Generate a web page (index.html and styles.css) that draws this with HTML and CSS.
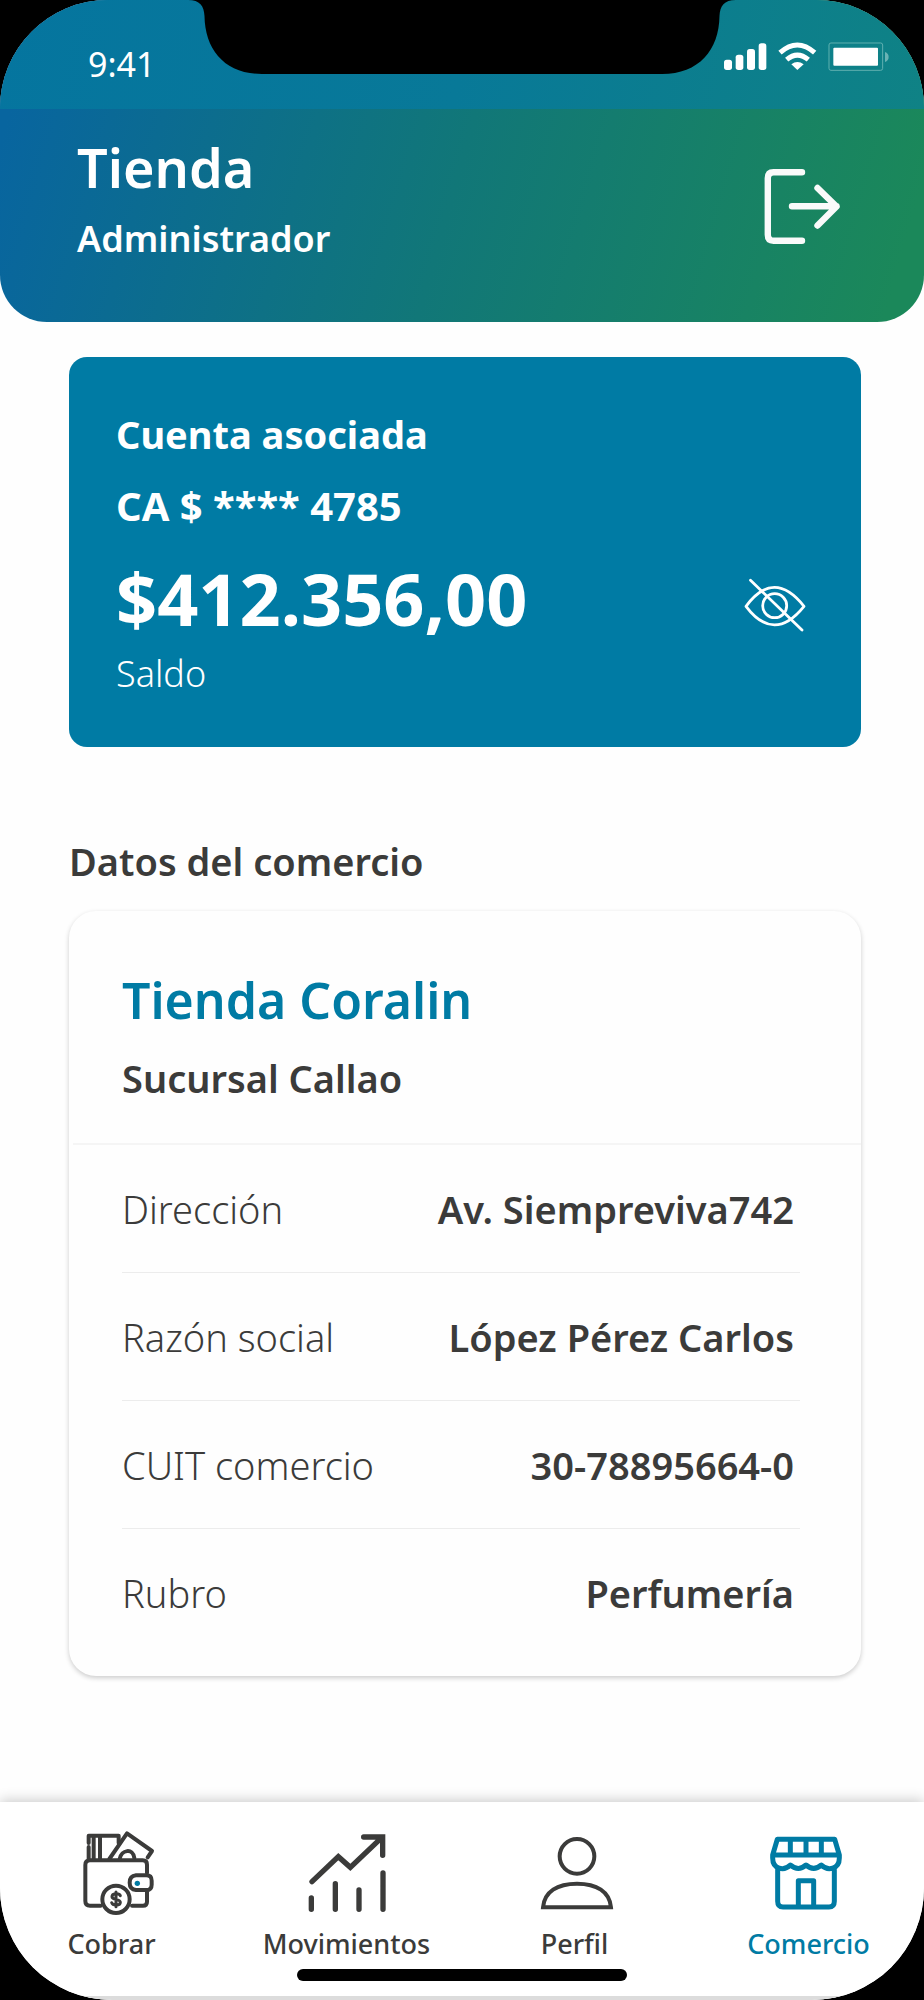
FILE: index.html
```html
<!DOCTYPE html>
<html lang="es">
<head>
<meta charset="utf-8">
<meta name="viewport" content="width=device-width, initial-scale=1">
<title>Comercio</title>
<link rel="stylesheet" href="styles.css">
</head>
<body>
<div class="phone">
  <header class="top">
    <div class="status">
      <svg class="notch" viewBox="188 0 548 75" aria-hidden="true"><path d="M188 0C200 0 204 6 204.5 16C205 50 225 74 262 74H662C699 74 719 50 719.5 16C720 6 724 0 736 0Z"/></svg>
      <span class="time">9:41</span>
      <svg class="signal" viewBox="780 120 510 100" aria-hidden="true">
        <g fill="#fff">
          <rect x="786" y="179" width="24" height="31" rx="8"/><rect x="821" y="164" width="23" height="46" rx="8"/><rect x="855" y="147" width="24" height="63" rx="8"/><rect x="890" y="130" width="23" height="80" rx="8"/>
          <path d="M1006 210L988 193Q1006 179 1025 193Z"/>
          <rect x="1114" y="143" width="134" height="54" rx="3"/>
        </g>
        <g fill="none" stroke="#fff" stroke-width="15"><path d="M954 158Q1006 112 1058 158"/><path d="M974 179Q1006 152 1039 179"/></g>
        <rect x="1101" y="129" width="161" height="82" rx="6" fill="none" stroke="#5fb0b0" stroke-width="3"/>
        <path d="M1269 156Q1280 160 1280 171Q1280 182 1269 186Z" fill="#6ab3b4"/>
      </svg>
    </div>
    <div class="brand">
      <div class="brand-text">
        <h1 class="brand-name">Tienda</h1>
        <p class="brand-role">Administrador</p>
      </div>
      <button class="icon-button" type="button" aria-label="Salir">
        <svg class="logout" viewBox="764 168 78 78" fill="none" stroke="#fafafa" stroke-width="6.4" stroke-linecap="round" stroke-linejoin="round"><path d="M802 172.3H773.5Q767.8 172.3 767.8 178.3V234.7Q767.8 240.7 773.5 240.7H802M792 206.3H836.5M817.5 188L836.5 206.5L817.5 225.5"/></svg>
      </button>
    </div>
  </header>

  <main class="content">
    <section class="account">
      <div>
        <h2 class="account-title">Cuenta asociada</h2>
        <p class="account-number">CA $ **** 4785</p>
        <p class="account-amount">$412.356,00</p>
        <p class="account-label">Saldo</p>
      </div>
      <button class="icon-button" type="button" aria-label="Ocultar saldo">
        <svg class="eye" viewBox="743 577 64 56" fill="none" stroke="#fff" stroke-width="2.8" stroke-linecap="round" stroke-linejoin="round"><path d="M746 606.3Q774 568.5 804 606.3Q774 643.500 746 606.3Z"/><circle cx="774.7" cy="605.7" r="12"/><path d="M750.500 580.3L802 630"/></svg>
      </button>
    </section>

    <h2 class="section-title">Datos del comercio</h2>
    <section class="shop">
      <div class="shop-head">
        <h3 class="shop-name">Tienda Coralin</h3>
        <p class="shop-branch">Sucursal Callao</p>
      </div>
      <dl class="details">
        <div class="row"><dt>Dirección</dt><dd>Av. Siempreviva742</dd></div>
        <div class="row"><dt>Razón social</dt><dd>López Pérez Carlos</dd></div>
        <div class="row"><dt>CUIT comercio</dt><dd>30-78895664-0</dd></div>
        <div class="row"><dt>Rubro</dt><dd>Perfumería</dd></div>
      </dl>
    </section>
  </main>

  <footer class="bottom">
    <nav class="tabs">
      <a class="tab tab-first" href="#cobrar">
        <svg class="tab-icon" viewBox="22 118 264 264" fill="none" stroke="currentColor" stroke-width="12" stroke-linecap="round" stroke-linejoin="round">
          <path d="M120 348H88Q74 348 74 334V226Q74 212 88 212H246Q259 212 259 225V250M259 306V336Q259 348 247 348H214"/>
          <path d="M84 208V172M84 160V138H174V160M99 140V208M118 140V208"/>
          <path d="M146 208L199 131L274 184L261 203M177 208C182 180 217 174 221 205"/>
          <path d="M226 257H257Q273 257 273 273V285Q273 301 257 301H226Q207 299 207 279Q207 259 226 257Z"/>
          <circle cx="166" cy="329" r="41"/>
          <path stroke-width="9" d="M179 318C175 309 154 311 154 321C154 332 179 326 179 338C179 349 156 349 153 339M166 307V351"/>
          <circle cx="230" cy="281" r="8" fill="#007ba4" stroke="none"/>
        </svg>
        <span>Cobrar</span>
      </a>
      <a class="tab" href="#movimientos">
        <svg class="tab-icon" viewBox="158 118 264 264" fill="none" stroke="currentColor" stroke-width="16" stroke-linecap="round"><path d="M185 276L264 201L300 233L394 144M340 142H397V197M183 325V359M255 282V359M326 301V359M398 250V359"/></svg>
        <span>Movimientos</span>
      </a>
      <a class="tab tab-profile" href="#perfil">
        <svg class="tab-icon" viewBox="35 118 264 264" fill="none" stroke="currentColor" stroke-width="12"><circle cx="173" cy="200" r="52"/><path d="M71 353H275C271 306 232 282 173 282C114 282 75 306 71 353Z"/></svg>
        <span>Perfil</span>
      </a>
      <a class="tab tab-active" href="#comercio" aria-current="page">
        <svg class="tab-icon" viewBox="104 118 264 264" fill="none" stroke="currentColor" stroke-width="15" stroke-linejoin="round"><path d="M141 149H313L327 196H127ZM180 149V196M227 149V196M273 149V196M127 196V205C127 239 161 245 180 226C197 240 211 240 227 226C243 240 257 240 273 226C292 245 327 239 327 205V196M142 234V335Q142 352 158 352H296Q312 352 312 335V234M204 352V273H250V352"/></svg>
        <span>Comercio</span>
      </a>
    </nav>
    <div class="home-indicator"></div>
  </footer>
</div>
</body>
</html>
```
FILE: styles.css
```css
* { box-sizing: border-box; }
body {
  margin: 0;
  background: #000;
  color: #3b3b3a;
  font-family: "Noto Sans", "Open Sans", sans-serif;
  font-weight: 600;
}
h1, h2, h3, p, dl, dd { margin: 0; font-weight: inherit; }

.phone {
  display: flex;
  flex-direction: column;
  min-height: 100vh;
  overflow: hidden;
  background: #fefefe;
  border-radius: 108px 108px 112px 112px;
}

.top {
  overflow: hidden;
  color: #fff;
  background: linear-gradient(106deg, #08659f 4%, #117778 50%, #1b885a 96%);
  border-radius: 0 0 47px 47px;
}
.status {
  position: relative;
  display: flex;
  justify-content: space-between;
  align-items: flex-start;
  padding: 40px 32px 0 88px;
  height: 109px;
  background: linear-gradient(100deg, #05759f, #087998 50%, #0f8285);
}
.notch {
  position: absolute;
  top: 0;
  right: 0;
  left: 0;
  width: 548px;
  margin: 0 auto;
}
.time { font-size: 34px; line-height: 48px; font-weight: 400; }
.signal { width: 170px; }
.brand {
  display: flex;
  justify-content: space-between;
  align-items: flex-start;
  padding: 26px 82px 59px 77px;
}
.brand-name { font-size: 54px; line-height: 64px; }
.brand-role { margin-top: 16px; font-size: 36px; line-height: 48px; }

.icon-button {
  display: block;
  padding: 0;
  border: 0;
  background: none;
}
.icon-button svg { display: block; }
.logout { width: 78px; margin-top: 33px; }
.eye { width: 64px; margin-top: 171px; }

.content { flex: 1; padding: 35px 63px 125px 69px; }
.account {
  display: flex;
  justify-content: space-between;
  align-items: flex-start;
  padding: 49px 54px 49px 47px;
  color: #fff;
  background: #007ba4;
  border-radius: 18px;
}
.account-title, .account-number { line-height: 56px; font-weight: 700; }
.account-title { font-size: 38px; }
.account-number { margin-top: 16px; font-size: 40px; }
.account-amount { margin-top: 20px; font-size: 72px; line-height: 88px; font-weight: 700; }
.account-label { margin-top: 8px; font-size: 36px; line-height: 48px; font-weight: 300; }

.section-title { margin-top: 86px; font-size: 38px; line-height: 56px; }
.shop {
  margin-top: 22px;
  padding-bottom: 20px;
  background: #fefefe;
  border-radius: 27px;
  box-shadow: 0 2px 5px rgba(0, 0, 0, 0.2);
}
.shop-head {
  margin-left: 4px;
  padding: 57px 48px 37px 49px;
  border-bottom: 2px solid #f5f5f5;
}
.shop-name { color: #007ba4; font-size: 50px; line-height: 64px; }
.shop-branch { margin-top: 18px; font-size: 38px; line-height: 56px; }
.details { padding: 0 61px 0 53px; }
.row {
  display: flex;
  justify-content: space-between;
  padding: 36px 6px 35px 0;
  border-bottom: 1px solid #ececec;
  font-size: 38px;
  line-height: 56px;
}
.row:last-child { border-bottom: 0; }
.row dt { font-weight: 300; }

.bottom {
  padding: 27px 0 15px;
  background: #fff;
  border-bottom: 4px solid #dcdcdc;
  box-shadow: 0 -2px 12px rgba(0, 0, 0, 0.2);
}
.tabs { display: grid; grid-template-columns: repeat(4, 1fr); }
.tab {
  display: flex;
  flex-direction: column;
  align-items: center;
  gap: 10px;
  color: #3b3b3a;
  font-size: 27px;
  line-height: 34px;
  font-weight: 500;
  text-decoration: none;
}
.tab-first { padding-right: 8px; }
.tab-profile { padding-right: 6px; }
.tab-active { color: #007ba4; }
.tab-icon { width: 88px; height: 88px; }
.home-indicator {
  width: 330px;
  height: 12px;
  margin: 8px auto 0;
  background: #000;
  border-radius: 6px;
}
```
